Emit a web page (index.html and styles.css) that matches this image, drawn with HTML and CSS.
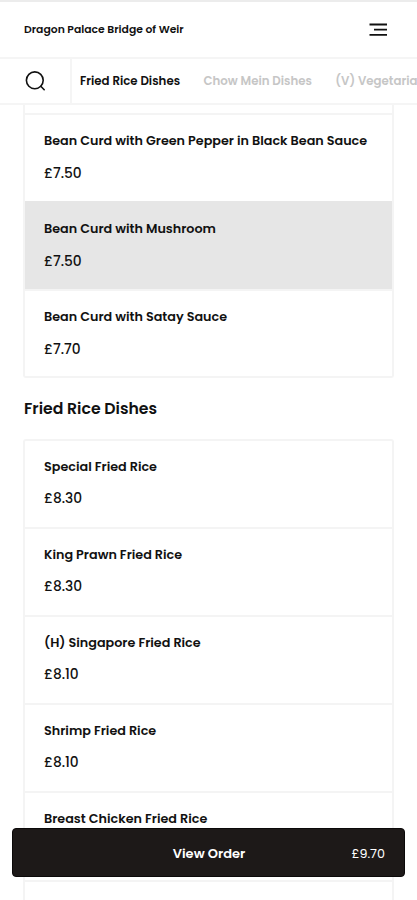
FILE: index.html
```html
<!DOCTYPE html>
<html lang="en">

<head>
  <meta charset="UTF-8">
  <meta name="viewport" content="width=device-width, initial-scale=1.0">
  <title>Dragon Palace Bridge of Weir</title>
  <link rel="stylesheet" href="styles.css">
</head>

<body>
  <header class="header">
    <div class="brand">Dragon Palace Bridge of Weir</div>
    <svg class="menu-icon" width="18" height="14" viewBox="0 0 18 14" fill="none" stroke="#111" stroke-width="1.8">
      <path d="M0.5 1.5H18M5 6.7H18M0.5 11.9H18" />
    </svg>
  </header>

  <nav class="categories">
    <div class="search">
      <svg width="22" height="22" viewBox="0 0 22 22" fill="none" stroke="#111" stroke-width="1.6" stroke-linecap="round">
        <circle cx="9.8" cy="10.3" r="8.4" />
        <path d="M15.8 16.3L19.2 19.7" />
      </svg>
    </div>
    <a class="category active">Fried Rice Dishes</a>
    <a class="category chow">Chow Mein Dishes</a>
    <a class="category vegetarian">(V) Vegetarian Dishes</a>
  </nav>

  <main class="menu">
    <section class="dishes continued">
      <div class="dish">
        <div class="name">Bean Curd with Green Pepper in Black Bean Sauce</div>
        <div class="price">£7.50</div>
      </div>
      <div class="dish selected">
        <div class="name">Bean Curd with Mushroom</div>
        <div class="price">£7.50</div>
      </div>
      <div class="dish">
        <div class="name">Bean Curd with Satay Sauce</div>
        <div class="price">£7.70</div>
      </div>
    </section>

    <h2>Fried Rice Dishes</h2>

    <section class="dishes">
      <div class="dish">
        <div class="name">Special Fried Rice</div>
        <div class="price">£8.30</div>
      </div>
      <div class="dish">
        <div class="name">King Prawn Fried Rice</div>
        <div class="price">£8.30</div>
      </div>
      <div class="dish">
        <div class="name">(H) Singapore Fried Rice</div>
        <div class="price">£8.10</div>
      </div>
      <div class="dish">
        <div class="name">Shrimp Fried Rice</div>
        <div class="price">£8.10</div>
      </div>
      <div class="dish">
        <div class="name">Breast Chicken Fried Rice</div>
      </div>
      <div class="dish"></div>
    </section>
  </main>

  <div class="order-bar">
    <span></span>
    <span class="order-label">View Order</span>
    <span class="order-total">£9.70</span>
  </div>
</body>

</html>
```

FILE: styles.css
```css
* {
  box-sizing: border-box;
}

body {
  margin: 0;
  height: 900px;
  overflow: hidden;
  background: #fff;
  color: #111;
  font-family: Poppins, Inter, sans-serif;
  font-weight: 600;
}

.header {
  height: 59px;
  padding: 0 30px 0 24px;
  border-top: 2px solid #ececec;
  border-bottom: 2px solid #f5f5f5;
  display: flex;
  align-items: center;
  justify-content: space-between;
}

.brand {
  font-size: 10.8px;
}

.categories {
  height: 46px;
  border-bottom: 2px solid #f5f5f5;
  display: flex;
  align-items: center;
  white-space: nowrap;
  overflow: hidden;
}

.search {
  width: 72px;
  height: 44px;
  padding-left: 25px;
  border-right: 2px solid #f5f5f5;
  display: flex;
  align-items: center;
  flex-shrink: 0;
}

.category {
  margin-left: 8px;
  font-size: 11.8px;
  color: #c6c6c6;
}

.category.active {
  color: #111;
}

.category.chow,
.category.vegetarian {
  margin-left: 23.3px;
}

.menu {
  height: 795px;
  padding: 0 23px;
  overflow: hidden;
}

.dishes {
  border: 2px solid #f4f4f4;
  border-radius: 3px;
}

.dishes.continued {
  border-top: none;
  border-radius: 0 0 3px 3px;
  padding-top: 8px;
}

.dish {
  height: 88.2px;
  padding: 16px 19px 0;
  border-bottom: 2px solid #f4f4f4;
}

.continued .dish {
  height: 88px;
  border-top: 2px solid #f4f4f4;
  border-bottom: none;
}

.dish:last-child {
  border-bottom: none;
}

.continued .dish:last-child {
  height: 87px;
}

.dish.selected {
  background: #e6e6e6;
  border-color: #e6e6e6;
}

.name {
  font-size: 12.75px;
  line-height: 20px;
}

.price {
  margin-top: 12px;
  font-size: 13.8px;
  font-weight: 500;
  line-height: 20px;
}

.continued .price {
  margin-top: 13px;
}

h2 {
  margin: 19px 1px 17.6px;
  font-size: 15.7px;
  font-weight: 600;
  line-height: 24px;
}

.order-bar {
  position: fixed;
  left: 12px;
  right: 12px;
  bottom: 23px;
  height: 49px;
  padding: 2px 19px 0 20px;
  border: 1px solid #0b0909;
  border-radius: 4px;
  background: #1d1918;
  color: #fff;
  display: grid;
  grid-template-columns: 1fr auto 1fr;
  align-items: center;
}

.order-label {
  font-size: 13px;
}

.order-total {
  font-size: 12.7px;
  font-weight: 400;
  text-align: right;
}
```
